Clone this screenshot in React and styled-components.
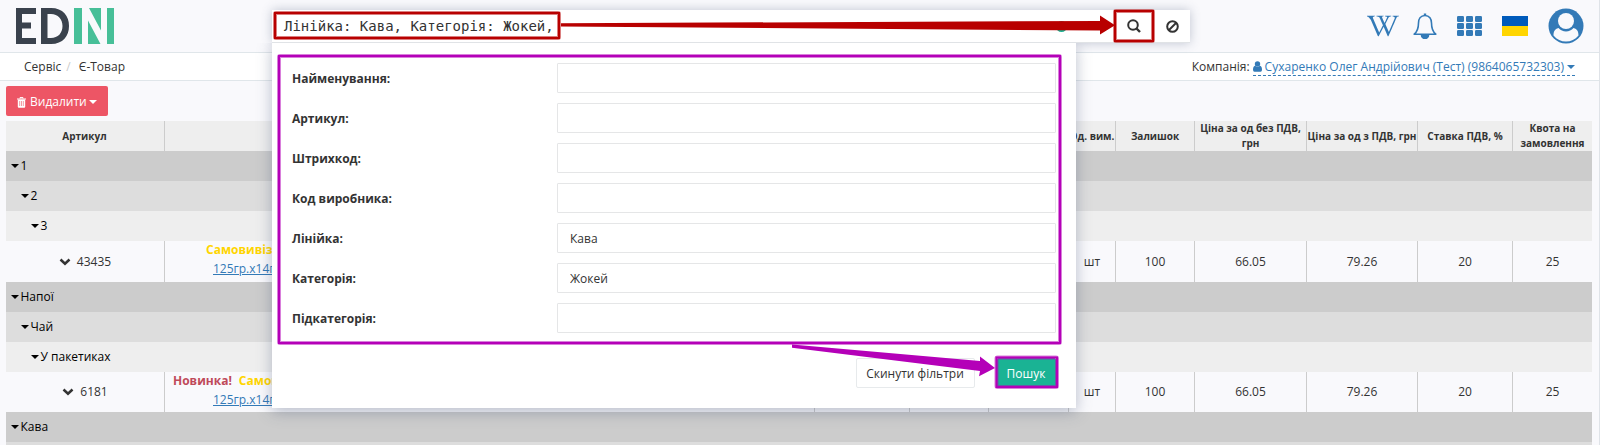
import React from "react";
import styled, { createGlobalStyle } from "styled-components";
import { FaWikipediaW } from "react-icons/fa";

const Global = createGlobalStyle`
  * { box-sizing: border-box; }
  body { margin: 0; background: #f9f9fc; overflow: hidden; }
  button, input { font: inherit; color: inherit; }
`;

const Page = styled.div`
  position: relative;
  height: 445px;
  overflow: hidden;
  border-right: 1px solid #dfe3e8;
  background: #f9f9fc;
  color: #333;
  font: 12px/20px "Open Sans", sans-serif;
`;

const Header = styled.header`
  display: flex;
  justify-content: space-between;
  height: 53px;
  padding: 8px 15px 0 16px;
  border-bottom: 1px solid #e0e6ea;
`;

const HeaderIcons = styled.nav`
  display: flex;
  align-items: center;
  height: 35px;
  color: #337ab7;
`;

const IconSlot = styled.span`
  display: flex;
  margin-left: ${(p) => p.$gap || 0}px;
`;

const Flag = styled.span`
  width: 26px;
  height: 20px;
  margin-left: 20px;
  background: linear-gradient(#005bbb 50%, #ffd500 50%);
`;

const Breadcrumbs = styled.div`
  display: flex;
  justify-content: space-between;
  height: 28px;
  padding: 4px 24px 0 24px;
  border-bottom: 1px solid #e0e6ea;
  background: #fff;
`;

const Crumb = styled.span`
  & + &::before {
    content: "/";
    padding: 0 8px 0 5px;
    color: #ccc;
  }
`;

const CompanyLink = styled.a`
  display: inline-flex;
  align-items: center;
  height: 19px;
  padding-top: 1px;
  margin-left: 3px;
  border-bottom: 1px dashed #337ab7;
  color: #337ab7;
  svg { margin-right: 3px; }
`;

const Caret = styled.i`
  display: inline-block;
  margin-left: ${(p) => p.$left || 0}px;
  margin-right: ${(p) => p.$right || 0}px;
  border: 4px solid transparent;
  border-top-color: currentColor;
  border-bottom: 0;
`;

const Company = styled.div`
  display: flex;
`;

const Content = styled.main`
  padding: 5px 7px 0 6px;
`;

const DeleteButton = styled.button`
  display: flex;
  align-items: center;
  width: 102px;
  height: 30px;
  padding: 2px 0 0 11px;
  border: 0;
  border-radius: 2px;
  background: #ed5565;
  color: #fff;
  svg { margin-right: 4px; }
`;

const Table = styled.div`
  margin-top: 5px;
`;

const Row = styled.div`
  display: grid;
  grid-template-columns: 159px 650px 95px 79px 80px 47px 79px 112px 111px 95px 79px;
  grid-template-rows: 100%;
  height: ${(p) => p.$height}px;
  background: ${(p) => (p.$head ? "#eee" : "transparent")};
  font-size: ${(p) => (p.$head ? "10px" : "12px")};
  font-weight: ${(p) => (p.$head ? 700 : 400)};
  line-height: ${(p) => (p.$head ? "15px" : "20px")};
`;

const Cell = styled.div`
  display: flex;
  align-items: center;
  justify-content: center;
  padding-right: ${(p) => (p.$first ? 1 : 0)}px;
  border-right: 1px solid #ccc;
  text-align: center;
  white-space: ${(p) => (p.$nowrap ? "nowrap" : "normal")};
  &:last-child { border-right: 0; }
`;

const NameCell = styled.div`
  padding-left: ${(p) => p.$indent}px;
  border-right: 1px solid #ccc;
  white-space: nowrap;
`;

const TagLine = styled.div`
  height: 19px;
  line-height: 17px;
`;

const Tag = styled.b`
  margin-right: 7px;
  color: ${(p) => (p.$fresh ? "#bf4a5a" : "#ffd500")};
`;

const ProductLink = styled.a`
  display: block;
  margin-left: ${(p) => p.$shift}px;
  color: #337ab7;
  line-height: 18px;
  text-decoration: underline;
`;

const Group = styled.div`
  display: flex;
  align-items: center;
  height: 30px;
  padding-left: ${(p) => 5 + p.$level * 10}px;
  background: ${(p) => ["#ccc", "#ddd", "#eee"][p.$level]};
  color: #000;
`;

const SearchLayer = styled.div`
  position: absolute;
  z-index: 1;
  left: 272px;
  top: 10px;
  width: 918px;
`;

const SearchBar = styled.div`
  position: relative;
  display: flex;
  align-items: center;
  height: 33px;
  border-bottom: 1px solid #e0e3e6;
  background: #fff;
  box-shadow: 0 0 10px rgba(60, 75, 110, 0.3);
`;

const Query = styled.div`
  flex: 1;
  padding-left: 12px;
  font: 14px/20px "DejaVu Sans Mono", monospace;
  white-space: nowrap;
`;

const BarButton = styled.button`
  display: flex;
  align-items: center;
  justify-content: center;
  width: 38px;
  height: 32px;
  padding: 0;
  border: 0;
  background: none;
`;

const Assistant = styled.span`
  display: flex;
  margin-right: 46px;
`;

const Popup = styled.section`
  position: relative;
  width: 804px;
  height: 365px;
  padding: 20px 20px 0;
  background: #fff;
  box-shadow: 0 4px 14px rgba(60, 75, 110, 0.35);
  clip-path: inset(0 -24px -24px -24px);
`;

const Field = styled.label`
  display: grid;
  grid-template-columns: 265px 499px;
  align-items: center;
  height: 30px;
  margin-bottom: 10px;
  font-weight: 700;
`;

const FieldName = styled.span`
  padding-top: 1px;
`;

const Input = styled.input`
  width: 499px;
  height: 30px;
  padding: 0 12px;
  border: 1px solid #e5e6e7;
  border-radius: 1px;
  background: #fff;
  font-weight: 400;
  outline: none;
`;

const Actions = styled.div`
  display: flex;
  justify-content: flex-end;
  gap: 22px;
  margin-top: 25px;
`;

const Action = styled.button`
  width: ${(p) => (p.$primary ? 59 : 119)}px;
  height: 30px;
  padding: 2px 1px 0 0;
  border: 1px solid ${(p) => (p.$primary ? "#1ab394" : "#e7eaec")};
  border-radius: 2px;
  background: ${(p) => (p.$primary ? "#1ab394" : "#fff")};
  color: ${(p) => (p.$primary ? "#fff" : "#333")};
`;

const Annotations = styled.svg`
  position: absolute;
  inset: 0;
  z-index: 2;
  pointer-events: none;
`;

const headings = ["Артикул", "", "", "", "", "Од. вим.", "Залишок", "Ціна за од без ПДВ, грн", "Ціна за од з ПДВ, грн", "Ставка ПДВ, %", "Квота на замовлення"];
const values = ["", "", "", "шт", "100", "66.05", "79.26", "20", "25"];
const fields = [
  ["Найменування:", ""],
  ["Артикул:", ""],
  ["Штрихкод:", ""],
  ["Код виробника:", ""],
  ["Лінійка:", "Кава"],
  ["Категорія:", "Жокей"],
  ["Підкатегорія:", ""],
];

function Logo() {
  return (
    <svg width="98" height="36" viewBox="0 0 98 36">
      <path fill="#3a424d" fillRule="evenodd" d="M0 0H20V6H6V14.500H15V20.500H6V30H20V36H0ZM25 0H35C47 0 53 8 53 18S47 36 35 36H25ZM31.500 6V30H35C42 30 46.500 25 46.500 18S42 6 35 6Z" />
      <path fill="#47bf98" d="M58 0H66V36H58ZM73 0H85V22.500ZM72 12.500L84.500 36H72ZM91 0H98V36H91Z" />
    </svg>
  );
}

function Bell() {
  return (
    <svg width="24" height="26" viewBox="0 0 24 26" fill="none" stroke="#337ab7" strokeWidth="1.600">
      <path d="M12 2.500C7.500 2.500 5.500 6 5.500 10C5.500 15.500 4.500 18.500 1.200 21.200H22.800C19.500 18.500 18.500 15.500 18.500 10C18.500 6 16.500 2.500 12 2.500Z" strokeLinejoin="round" />
      <path d="M12 .5V2.500" strokeWidth="2.400" />
      <path d="M8.500 22A3.500 3.500 0 0 0 15.500 22Z" fill="#337ab7" />
    </svg>
  );
}

function Apps() {
  return (
    <svg width="25" height="20" viewBox="0 0 25 20" fill="#337ab7">
      {[0, 7, 14].map((y) => [0, 9, 18].map((x) => <rect key={x + "-" + y} x={x} y={y} width="7" height="6" rx="1.300" />))}
    </svg>
  );
}

function Avatar() {
  return (
    <svg width="36" height="36" viewBox="0 0 36 36">
      <circle cx="18" cy="18" r="17.500" fill="#337ab7" />
      <path d="M10.500 20C6.500 21 5.500 24 5.500 27.500C9 31.500 13 33.500 18 33.500S27 31.500 30.500 27.500C30.500 24 29.500 21 25.500 20A10 10 0 0 1 10.500 20Z" fill="#f9f9fc" />
      <circle cx="18" cy="13" r="8" fill="#f9f9fc" />
    </svg>
  );
}

function Chevron() {
  return (
    <svg width="12" height="8" viewBox="0 0 12 8">
      <path d="M1.500 1.500L6 5.700L10.500 1.500" fill="none" stroke="#333" strokeWidth="2.500" />
    </svg>
  );
}

function Person() {
  return (
    <svg width="9" height="11" viewBox="0 0 9 11" fill="currentColor">
      <path d="M2 4.800Q4.500 7 7 4.800Q9 5.200 9 8.800Q9 10.800 7.500 10.800H1.500Q0 10.800 0 8.800Q0 5.200 2 4.800Z" />
      <circle cx="4.500" cy="3" r="2.700" />
    </svg>
  );
}

function Trash() {
  return (
    <svg width="9" height="11" viewBox="0 0 9 11">
      <path d="M3 1.500V.6H6V1.500M0 2H9" fill="none" stroke="#fff" />
      <path d="M.8 2.500H8.200V9.500Q8.200 10.800 7.200 10.800H1.800Q.8 10.800 .8 9.500Z" fill="#fff" />
      <path d="M2.700 4V9M4.500 4V9M6.300 4V9" stroke="#ed5565" strokeWidth=".6" />
    </svg>
  );
}

const Code = styled.span`
  margin-left: 6px;
`;

function Product({ code, fresh, height }) {
  return (
    <Row $height={height}>
      <Cell><Chevron /><Code>{code}</Code></Cell>
      <NameCell $indent={fresh ? 8 : 41}>
        <TagLine>
          {fresh && <Tag $fresh>Новинка!</Tag>}
          <Tag>Самовивіз</Tag>
        </TagLine>
        <ProductLink $shift={fresh ? 40 : 7}>125гр.х14гр</ProductLink>
      </NameCell>
      {values.map((v, i) => <Cell key={i}>{v}</Cell>)}
    </Row>
  );
}

function GroupRow({ level, children }) {
  return <Group $level={level}><Caret $right={1.5} />{children}</Group>;
}

function Frame({ x, y, w, h, color }) {
  return (
    <g fill="none" stroke={color}>
      <rect x={x} y={y} width={w} height={h} rx="1" strokeWidth="4" opacity=".5" />
      <rect x={x} y={y} width={w} height={h} strokeWidth="2" />
    </g>
  );
}

export default function App() {
  return (
    <Page>
      <Global />
      <Header>
        <Logo />
        <HeaderIcons>
          <IconSlot><FaWikipediaW size={32} /></IconSlot>
          <IconSlot $gap={14}><Bell /></IconSlot>
          <IconSlot $gap={20}><Apps /></IconSlot>
          <Flag />
          <IconSlot $gap={20}><Avatar /></IconSlot>
        </HeaderIcons>
      </Header>
      <Breadcrumbs>
        <div><Crumb>Сервіс</Crumb><Crumb>Є-Товар</Crumb></div>
        <Company>
          Компанія:
          <CompanyLink><Person />Сухаренко Олег Андрійович (Тест) (9864065732303)<Caret $left={3} /></CompanyLink>
        </Company>
      </Breadcrumbs>
      <Content>
        <DeleteButton><Trash />Видалити<Caret $left={2} /></DeleteButton>
        <Table>
          <Row $head $height={30}>
            {headings.map((h, i) => <Cell key={i} $first={i === 0} $nowrap={i === 5 || i === 8}>{h}</Cell>)}
          </Row>
          <GroupRow level={0}>1</GroupRow>
          <GroupRow level={1}>2</GroupRow>
          <GroupRow level={2}>3</GroupRow>
          <Product code="43435" height={41} />
          <GroupRow level={0}>Напої</GroupRow>
          <GroupRow level={1}>Чай</GroupRow>
          <GroupRow level={2}>У пакетиках</GroupRow>
          <Product code="6181" fresh height={40} />
          <GroupRow level={0}>Кава</GroupRow>
          <GroupRow level={1} />
        </Table>
      </Content>
      <SearchLayer>
        <SearchBar>
          <Query>Лінійка: Кава, Категорія: Жокей,</Query>
          <Assistant>
            <svg width="13" height="13" viewBox="0 0 13 13"><circle cx="6.500" cy="6.500" r="5.500" fill="#15b393" /></svg>
          </Assistant>
          <BarButton>
            <svg width="16" height="14" viewBox="-2 0 16 14" fill="none" stroke="#333" strokeWidth="2"><circle cx="6" cy="6" r="4.800" /><path d="M9.500 9.500L13 13" strokeWidth="2.400" /></svg>
          </BarButton>
          <BarButton>
            <svg width="15" height="13" viewBox="-2 0 15 13" fill="none" stroke="#333" strokeWidth="2"><circle cx="6.500" cy="6.500" r="5.300" /><path d="M3 10L10 3" /></svg>
          </BarButton>
        </SearchBar>
        <Popup>
          {fields.map(([label, value]) => (
            <Field key={label}><FieldName>{label}</FieldName><Input defaultValue={value} /></Field>
          ))}
          <Actions>
            <Action>Скинути фільтри</Action>
            <Action $primary>Пошук</Action>
          </Actions>
        </Popup>
      </SearchLayer>
      <Annotations width="1600" height="445">
        <Frame x={275} y={13} w={284} h={25} color="#b80000" />
        <Frame x={1115} y={11} w={38} h={30} color="#b80000" />
        <path d="M561 23.200L1100 21V15.500L1115 25.200L1100 34.500V30.500L561 26.600Z" fill="#b80000" />
        <Frame x={279} y={56} w={781} h={287} color="#b400b8" />
        <Frame x={996.500} y={357.500} w={60.500} h={29.500} color="#b400b8" />
        <path d="M792 344.500L980 361V356.500L995 368L979 376.300L980 371L792 347.700Z" fill="#b400b8" />
      </Annotations>
    </Page>
  );
}
